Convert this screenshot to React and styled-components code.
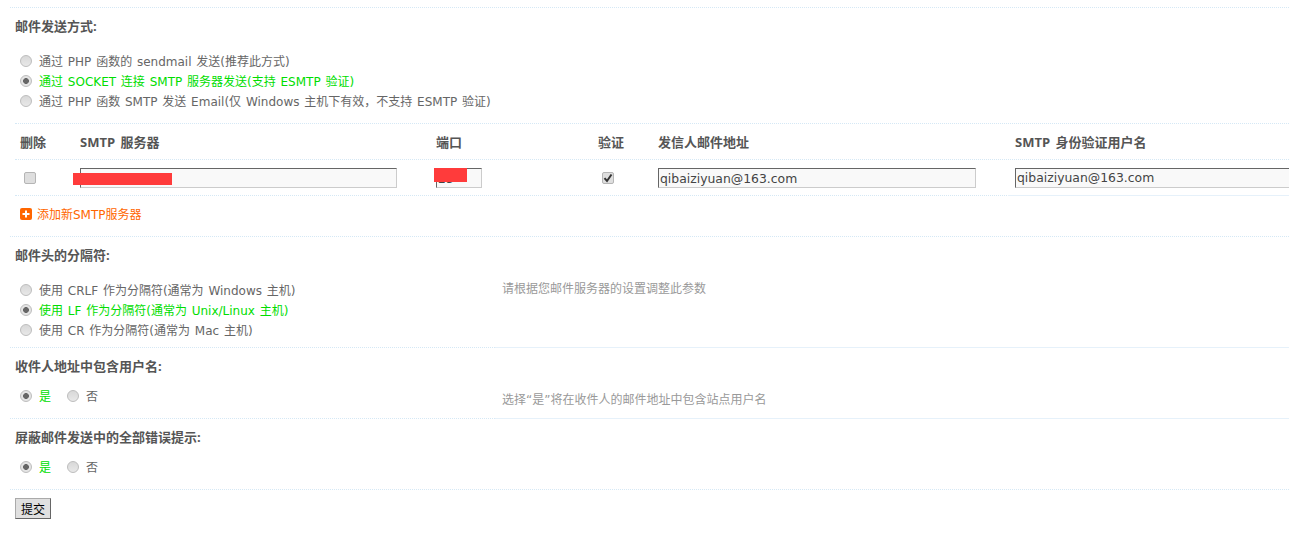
import styled, { createGlobalStyle } from "styled-components";

const GlobalStyle = createGlobalStyle`
  html, body {
    margin: 0;
    padding: 0;
    background: #fff;
    overflow: hidden;
  }
  body {
    font: 12px/20px "DejaVu Sans", "Noto Sans CJK SC", sans-serif;
    color: #666;
    word-spacing: 1px;
  }
`;

const Page = styled.form`
  width: 1289px;
  height: 543px;
  padding-top: 7px;
  box-sizing: border-box;
  overflow: hidden;
`;

const Section = styled.div`
  margin-left: 10px;
  border-top: 1px dotted #d5e8f5;
`;

const Title = styled.div`
  height: 36px;
  padding-left: 5px;
  font: 700 13px/36px "Open Sans", "Noto Sans CJK SC", sans-serif;
  color: #555;
`;

const OptionRow = styled.div`
  display: grid;
  grid-template-columns: 485px 1fr;
`;

const Options = styled.div`
  padding: ${(p) => p.$top}px 0 ${(p) => p.$bottom}px 10px;
  display: flex;
  flex-direction: ${(p) => (p.$inline ? "row" : "column")};
  gap: ${(p) => (p.$inline ? "16px" : "0")};
`;

const Hint = styled.div`
  padding: 6px 0 0 7px;
  color: #999;
  border-bottom: 1px solid #e6f1fa;
  margin-bottom: -1px;
`;

const Option = styled.label`
  display: flex;
  align-items: center;
  gap: 7px;
  height: 20px;
  color: ${(p) => (p.$on ? "#00dd00" : "#666")};
`;

const Caption = styled.span`
  margin-top: 2px;
`;

const Radio = styled.span`
  width: 12px;
  height: 12px;
  box-sizing: border-box;
  border-radius: 50%;
  border: 1px solid #bdbdbd;
  background: ${(p) =>
    p.$on
      ? "radial-gradient(circle, #666 0 2.6px, #e4e4e4 3.2px)"
      : "linear-gradient(#d8d8d8, #e8e8e8)"};
`;

const TableWrap = styled.div`
  margin-left: 15px;
  border-top: 1px dotted #d5e8f5;
`;

const TableRow = styled.div`
  display: grid;
  grid-template-columns: 65px 356px 162px 60px 357px 320px;
  height: 35px;
  border-bottom: 1px dotted #d5e8f5;
  align-items: center;
`;

const Head = styled.div`
  font: 700 13px/20px "Open Sans", "Noto Sans CJK SC", sans-serif;
  word-spacing: 2px;
  color: #555;
  white-space: nowrap;
  padding-left: ${(p) => p.$pad || 0}px;
`;

const Cell = styled.div`
  position: relative;
  display: flex;
  align-items: center;
  height: 20px;
  padding-left: ${(p) => p.$pad || 0}px;
`;

const TailCell = styled.div`
  display: flex;
  align-items: center;
  align-self: start;
  box-sizing: border-box;
  height: 36px;
  margin-left: -7px;
  padding-left: 7px;
  border-bottom: 1px solid #e6f1fa;
`;

const TextInput = styled.input`
  box-sizing: border-box;
  width: ${(p) => p.$w}px;
  height: 20px;
  flex: none;
  padding: 0 1px;
  margin: 0;
  border: 1px solid;
  border-color: #666 #ccc #ccc #666;
  background: #f9f9f9;
  color: #444;
  font: 12.4px "DejaVu Sans", sans-serif;
  outline: none;
`;

const Box = styled.span`
  display: flex;
  align-items: center;
  justify-content: center;
  width: 12px;
  height: 12px;
  box-sizing: border-box;
  border: 1px solid #b5b5b5;
  border-radius: 2px;
  background: #dedede;
  color: #333;
`;

const Redact = styled.div`
  position: absolute;
  left: ${(p) => p.$x}px;
  top: ${(p) => p.$y}px;
  width: ${(p) => p.$w}px;
  height: ${(p) => p.$h}px;
  background: #ff3b3b;
`;

const AddLine = styled.div`
  display: flex;
  align-items: center;
  gap: 5px;
  height: 40px;
  padding: 0 0 4px 5px;
  box-sizing: border-box;
  color: #f60;
  word-spacing: 0;
`;

const SubmitRow = styled.div`
  margin-left: 10px;
  border-top: 1px dotted #d5e8f5;
  padding: 8px 0 0 5px;
`;

const Submit = styled.button`
  display: block;
  box-sizing: border-box;
  width: 36px;
  height: 21px;
  padding: 0;
  border: 1px solid;
  border-color: #aaa #666 #666 #aaa;
  background: #e0e0e0;
  color: #000;
  font: 12px "Noto Sans CJK SC", sans-serif;
`;

function Choice({ on, children }) {
  return (
    <Option $on={on}>
      <Radio $on={on} />
      <Caption>{children}</Caption>
    </Option>
  );
}

export default function App() {
  return (
    <Page onSubmit={(e) => e.preventDefault()}>
      <GlobalStyle />
      <Section>
        <Title>邮件发送方式:</Title>
        <Options $top={7} $bottom={12}>
          <Choice>通过 PHP 函数的 sendmail 发送(推荐此方式)</Choice>
          <Choice on>通过 SOCKET 连接 SMTP 服务器发送(支持 ESMTP 验证)</Choice>
          <Choice>通过 PHP 函数 SMTP 发送 Email(仅 Windows 主机下有效，不支持 ESMTP 验证)</Choice>
        </Options>
      </Section>

      <TableWrap>
        <TableRow>
          <Head $pad={5}>删除</Head>
          <Head>SMTP 服务器</Head>
          <Head>端口</Head>
          <Head>验证</Head>
          <Head>发信人邮件地址</Head>
          <Head>SMTP 身份验证用户名</Head>
        </TableRow>
        <TableRow>
          <Cell $pad={9}>
            <Box />
          </Cell>
          <Cell>
            <TextInput $w={317} defaultValue="" />
            <Redact $x={-7} $y={5} $w={99} $h={12} />
          </Cell>
          <Cell>
            <TextInput $w={46} defaultValue="25" />
            <Redact $x={-2} $y={0} $w={33} $h={14} />
          </Cell>
          <Cell $pad={4}>
            <Box>
              <svg width="10" height="10" viewBox="0 0 10 10">
                <path d="M1.5 5.2 4 8 8.5 1.5" fill="none" stroke="#333" strokeWidth="2" />
              </svg>
            </Box>
          </Cell>
          <Cell>
            <TextInput $w={318} defaultValue="qibaiziyuan@163.com" />
          </Cell>
          <TailCell>
            <TextInput $w={300} defaultValue="qibaiziyuan@163.com" />
          </TailCell>
        </TableRow>
        <AddLine>
          <svg width="12" height="12" viewBox="0 0 12 12">
            <rect width="12" height="12" rx="2" fill="#f60" />
            <path d="M6 2.5v7M2.5 6h7" stroke="#fff" strokeWidth="2" />
          </svg>
          <Caption>添加新SMTP服务器</Caption>
        </AddLine>
      </TableWrap>

      <Section>
        <Title>邮件头的分隔符:</Title>
        <OptionRow>
          <Options $top={7} $bottom={7}>
            <Choice>使用 CRLF 作为分隔符(通常为 Windows 主机)</Choice>
            <Choice on>使用 LF 作为分隔符(通常为 Unix/Linux 主机)</Choice>
            <Choice>使用 CR 作为分隔符(通常为 Mac 主机)</Choice>
          </Options>
          <Hint>请根据您邮件服务器的设置调整此参数</Hint>
        </OptionRow>
      </Section>

      <Section>
        <Title>收件人地址中包含用户名:</Title>
        <OptionRow>
          <Options $inline $top={2} $bottom={12}>
            <Choice on>是</Choice>
            <Choice>否</Choice>
          </Options>
          <Hint>选择“是”将在收件人的邮件地址中包含站点用户名</Hint>
        </OptionRow>
      </Section>

      <Section>
        <Title>屏蔽邮件发送中的全部错误提示:</Title>
        <Options $inline $top={2} $bottom={12}>
          <Choice on>是</Choice>
          <Choice>否</Choice>
        </Options>
      </Section>

      <SubmitRow>
        <Submit type="submit">提交</Submit>
      </SubmitRow>
    </Page>
  );
}
